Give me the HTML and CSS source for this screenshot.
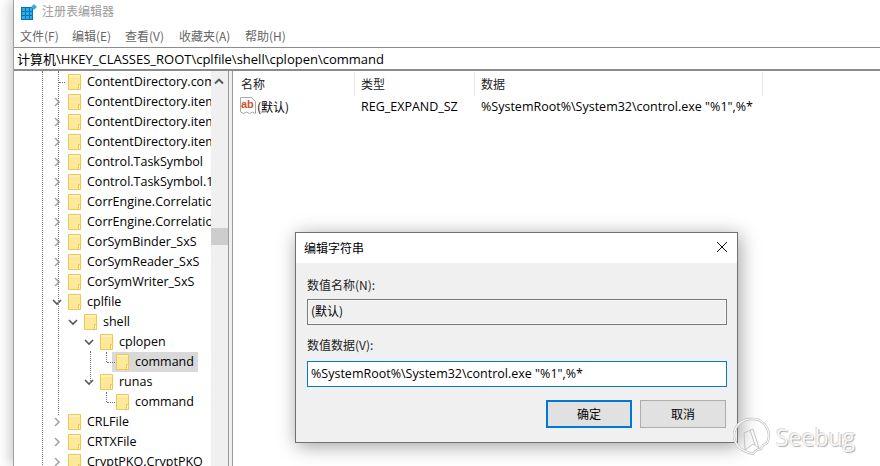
FILE: index.html
```html
<!DOCTYPE html>
<html lang="zh-CN">
<head>
<meta charset="utf-8">
<title>注册表编辑器</title>
<link rel="stylesheet" href="styles.css">
</head>
<body>
<svg class="defs" width="0" height="0" aria-hidden="true">
  <symbol id="folder" viewBox="0 0 13 16">
    <path d="M.5.5h12v15H.5z" fill="#fee99a" stroke="#efc850"/>
    <path d="M1 1h11v2H1z" fill="#fff0b8"/>
    <path d="M10.5 10.5h2v5h-2z" fill="#fff6d0" stroke="#efc850"/>
  </symbol>
  <symbol id="right" viewBox="0 0 10 10"><path d="M3 1l4 4-4 4" fill="none" stroke="#a6a6a6" stroke-width="1.6"/></symbol>
  <symbol id="down" viewBox="0 0 10 10"><path d="M1 3l4 4 4-4" fill="none" stroke="#555" stroke-width="1.6"/></symbol>
</svg>
<div class="window">
  <header class="titlebar">
    <svg class="appicon" width="16" height="16" viewBox="0 0 16 16">
      <path d="M0 3h12v13H0z" fill="#0b6fb0"/>
      <path d="M1 4h3v3H1zM5 4h3v3H5zM9 4h2v3H9zM1 8h3v3H1zM5 8h3v3H5zM9 8h2v3H9zM1 12h3v3H1zM5 12h3v3H5zM9 12h2v3H9z" fill="#29b0ea"/>
      <path d="M13 0l3 3-3 3-3-3z" fill="#4aa6d8"/>
    </svg>
    <span class="apptitle">注册表编辑器</span>
  </header>
  <nav class="menu">
    <span class="m1">文件(F)</span>
    <span class="m2">编辑(E)</span>
    <span class="m3">查看(V)</span>
    <span class="m4">收藏夹(A)</span>
    <span>帮助(H)</span>
  </nav>
  <div class="address">计算机\HKEY_CLASSES_ROOT\cplfile\shell\cplopen\command</div>
  <div class="panes">
    <div class="tree">
      <div class="guide g1"></div>
      <div class="guide g2"></div>
      <div class="guide g3"></div>
      <div class="guide g4"></div>
      <div class="guide g5"></div>
      <div class="hguide h1"></div>
      <div class="hguide h2"></div>
      <div class="hguide h3"></div>
      <div class="row d0"><span class="slot"></span><span class="label"><svg class="folder"><use href="#folder"/></svg>ContentDirectory.com</span></div>
      <div class="row d0"><span class="slot"><svg class="arrow"><use href="#right"/></svg></span><span class="label"><svg class="folder"><use href="#folder"/></svg>ContentDirectory.item</span></div>
      <div class="row d0"><span class="slot"><svg class="arrow"><use href="#right"/></svg></span><span class="label"><svg class="folder"><use href="#folder"/></svg>ContentDirectory.item</span></div>
      <div class="row d0"><span class="slot"><svg class="arrow"><use href="#right"/></svg></span><span class="label"><svg class="folder"><use href="#folder"/></svg>ContentDirectory.item</span></div>
      <div class="row d0"><span class="slot"><svg class="arrow"><use href="#right"/></svg></span><span class="label"><svg class="folder"><use href="#folder"/></svg>Control.TaskSymbol</span></div>
      <div class="row d0"><span class="slot"><svg class="arrow"><use href="#right"/></svg></span><span class="label"><svg class="folder"><use href="#folder"/></svg>Control.TaskSymbol.1</span></div>
      <div class="row d0"><span class="slot"><svg class="arrow"><use href="#right"/></svg></span><span class="label"><svg class="folder"><use href="#folder"/></svg>CorrEngine.Correlation</span></div>
      <div class="row d0"><span class="slot"><svg class="arrow"><use href="#right"/></svg></span><span class="label"><svg class="folder"><use href="#folder"/></svg>CorrEngine.Correlation</span></div>
      <div class="row d0"><span class="slot"><svg class="arrow"><use href="#right"/></svg></span><span class="label"><svg class="folder"><use href="#folder"/></svg>CorSymBinder_SxS</span></div>
      <div class="row d0"><span class="slot"><svg class="arrow"><use href="#right"/></svg></span><span class="label"><svg class="folder"><use href="#folder"/></svg>CorSymReader_SxS</span></div>
      <div class="row d0"><span class="slot"><svg class="arrow"><use href="#right"/></svg></span><span class="label"><svg class="folder"><use href="#folder"/></svg>CorSymWriter_SxS</span></div>
      <div class="row d0"><span class="slot"><svg class="arrow"><use href="#down"/></svg></span><span class="label"><svg class="folder"><use href="#folder"/></svg>cplfile</span></div>
      <div class="row d1"><span class="slot"><svg class="arrow"><use href="#down"/></svg></span><span class="label"><svg class="folder"><use href="#folder"/></svg>shell</span></div>
      <div class="row d2"><span class="slot"><svg class="arrow"><use href="#down"/></svg></span><span class="label"><svg class="folder"><use href="#folder"/></svg>cplopen</span></div>
      <div class="row d3"><span class="slot"></span><span class="label selected"><svg class="folder"><use href="#folder"/></svg>command</span></div>
      <div class="row d2"><span class="slot"><svg class="arrow"><use href="#down"/></svg></span><span class="label"><svg class="folder"><use href="#folder"/></svg>runas</span></div>
      <div class="row d3"><span class="slot"></span><span class="label"><svg class="folder"><use href="#folder"/></svg>command</span></div>
      <div class="row d0"><span class="slot"><svg class="arrow"><use href="#right"/></svg></span><span class="label"><svg class="folder"><use href="#folder"/></svg>CRLFile</span></div>
      <div class="row d0"><span class="slot"><svg class="arrow"><use href="#right"/></svg></span><span class="label"><svg class="folder"><use href="#folder"/></svg>CRTXFile</span></div>
      <div class="row d0"><span class="slot"><svg class="arrow"><use href="#right"/></svg></span><span class="label"><svg class="folder"><use href="#folder"/></svg>CryptPKO.CryptPKO</span></div>
    </div>
    <div class="scrollbar">
      <svg class="uparrow" width="10" height="7" viewBox="0 0 10 7"><path d="M1 5.5l4-4 4 4" fill="none" stroke="#555" stroke-width="1.8"/></svg>
      <div class="thumb"></div>
    </div>
    <div class="splitter"></div>
    <div class="list">
      <div class="listhead">
        <span class="col c1">名称</span>
        <span class="col c2">类型</span>
        <span class="col c3">数据</span>
      </div>
      <div class="listrow">
        <span class="c1 cell">
          <svg class="abicon" width="16" height="18" viewBox="0 0 16 18">
            <path d="M.5.5h11l4 4v12l-3-1.5-3 1.5-3-1.5-3 1.5-3-1.5z" fill="#fff" stroke="#a8a8a8"/>
            <text x="1" y="11" class="abtext">ab</text>
          </svg>(默认)
        </span>
        <span class="c2">REG_EXPAND_SZ</span>
        <span class="c3">%SystemRoot%\System32\control.exe "%1",%*</span>
      </div>
    </div>
  </div>
</div>
<section class="dialog">
  <div class="dtitle">
    <span>编辑字符串</span>
    <svg width="12" height="12" viewBox="0 0 12 12"><path d="M1 1l10 10M11 1L1 11" stroke="#111" stroke-width="1" fill="none"/></svg>
  </div>
  <div class="dbody">
    <div class="flabel">数值名称(N):</div>
    <div class="field readonly">(默认)</div>
    <div class="flabel second">数值数据(V):</div>
    <div class="field active">%SystemRoot%\System32\control.exe "%1",%*</div>
    <div class="buttons">
      <span class="btn primary">确定</span>
      <span class="btn">取消</span>
    </div>
  </div>
</section>
<div class="watermark">
  <svg width="38" height="40" viewBox="0 0 38 40">
    <g fill="none" stroke-linejoin="round">
      <g stroke="#bdbdbd" stroke-width="2.4">
        <path d="M18 2a16.500 16.500 0 0 1 16 24c-3 1-5 3-6 6-3 0-6 2-8 5-4-1-9-3-12-5A16.500 16.500 0 0 1 18 2z"/>
      </g>
      <g stroke="#fbfbfb" stroke-width="1.2">
        <path d="M18 2a16.500 16.500 0 0 1 16 24c-3 1-5 3-6 6-3 0-6 2-8 5-4-1-9-3-12-5A16.500 16.500 0 0 1 18 2z"/>
      </g>
      <g stroke="#c4c4c4" stroke-width="1">
        <path d="M11 16l9-4 6 19-6-4-8 6z"/>
        <path d="M17 13l5 15"/>
      </g>
    </g>
  </svg>
  <span class="wmtext">Seebug</span>
</div>
</body>
</html>
```

FILE: styles.css
```css
* { box-sizing: border-box; }
html, body { margin: 0; height: 466px; overflow: hidden; background: #fff; }
body {
  position: relative;
  width: 880px;
  font-family: "Open Sans", "Noto Sans CJK SC", sans-serif;
  font-size: 12.5px;
  color: #000;
}
.defs { position: absolute; }

.window {
  margin-left: 13px;
  height: 466px;
  display: flex;
  flex-direction: column;
  border-left: 1px solid #a0a0a0;
  background: #fff;
  box-shadow: -3px 0 12px rgba(0, 0, 0, 0.22);
}
.titlebar { height: 26px; display: flex; align-items: flex-start; padding: 4px 0 0 7px; flex: none; }
.appicon { margin-right: 5px; }
.apptitle { font-size: 12px; line-height: 14px; color: #9a9a9a; font-family: "Noto Sans CJK SC", sans-serif; }
.menu {
  height: 21px;
  flex: none;
  display: flex;
  align-items: center;
  padding: 0 0 2px 6px;
  font-size: 12px;
  color: #666;
  font-family: "Noto Sans CJK SC", sans-serif;
}
.m1 { width: 52px; }
.m2 { width: 53px; }
.m3 { width: 54px; }
.m4 { width: 66px; }
.address {
  height: 24px;
  flex: none;
  display: flex;
  align-items: center;
  padding-left: 3px;
  border-top: 1px solid #8c8c8c;
  border-bottom: 2px solid #8c8c8c;
  font-size: 13px;
  white-space: nowrap;
}

.panes { flex: 1; display: flex; min-height: 0; }
.tree { position: relative; width: 197px; flex: none; padding-top: 1px; overflow: hidden; font-size: 12.5px; }
.row { height: 20px; display: flex; align-items: center; white-space: nowrap; }
.d0 { padding-left: 36px; }
.d1 { padding-left: 52px; }
.d2 { padding-left: 68px; }
.d3 { padding-left: 84px; }
.slot { width: 14px; flex: none; display: flex; justify-content: center; }
.arrow { width: 10px; height: 10px; }
.label { height: 20px; display: flex; align-items: flex-start; line-height: 19px; padding: 0 4px; }
.selected { background: #d9d9d9; }
.folder { width: 13px; height: 16px; margin: 2px 6px 0 0; flex: none; }

.guide, .hguide { position: absolute; }
.guide { border-left: 1px dotted #777; width: 0; }
.hguide { border-top: 1px dotted #777; height: 0; }
.g1 { left: 28px; top: 0; height: 396px; }
.g2 { left: 44px; top: 0; height: 344px; }
.g3 { left: 76px; top: 280px; height: 32px; }
.g4 { left: 92px; top: 281px; height: 10px; }
.g5 { left: 92px; top: 321px; height: 10px; }
.h1 { left: 45px; top: 11px; width: 6px; }
.h2 { left: 93px; top: 291px; width: 8px; }
.h3 { left: 93px; top: 331px; width: 8px; }

.scrollbar { position: relative; width: 17px; flex: none; background: #f0f0f0; }
.uparrow { position: absolute; left: 3px; top: 7px; }
.thumb { position: absolute; left: 0; top: 157px; width: 17px; height: 17px; background: #cdcdcd; }
.splitter {
  width: 5px;
  flex: none;
  background: #f0f0f0;
  border-left: 1px solid #9a9a9a;
  border-right: 1px solid #9a9a9a;
}
.list { flex: 1; min-width: 0; }
.listhead { height: 25px; display: flex; align-items: center; font-family: "Noto Sans CJK SC", sans-serif; font-size: 12px; color: #222; }
.col { height: 24px; display: flex; align-items: center; border-right: 1px solid #e5e5e5; }
.listrow { height: 20px; display: flex; align-items: center; white-space: nowrap; }
.c1 { width: 122px; padding-left: 8px; flex: none; }
.c2 { width: 120px; padding-left: 6px; flex: none; }
.c3 { width: 288px; padding-left: 6px; flex: none; }
.listrow .c1 { padding-left: 7px; }
.cell { display: flex; align-items: center; font-family: "Noto Sans CJK SC", sans-serif; font-size: 12px; }
.abicon { margin-right: 1px; }
.abtext { font: bold 11px "Liberation Sans", sans-serif; fill: #d2502a; }

.dialog {
  position: absolute;
  left: 295px;
  top: 232px;
  width: 443px;
  height: 211px;
  border: 1px solid #707070;
  background: #f0f0f0;
  box-shadow: 2px 3px 18px rgba(0, 0, 0, 0.38);
  display: flex;
  flex-direction: column;
}
.dtitle {
  height: 30px;
  flex: none;
  background: #fff;
  display: flex;
  align-items: center;
  justify-content: space-between;
  padding: 0 9px 2px 8px;
  font-family: "Noto Sans CJK SC", sans-serif;
  font-size: 12px;
}
.dbody { flex: 1; padding: 11px 10px 0 11px; }
.flabel { height: 20px; display: flex; align-items: center; font-family: "Noto Sans CJK SC", sans-serif; font-size: 12px; color: #222; }
.second { margin-top: 9px; }
.field { height: 26px; margin-top: 5px; display: flex; align-items: center; padding-left: 3px; }
.readonly { border: 1px solid #7a7a7a; box-shadow: inset 0 0 0 1px #fafafa; padding-bottom: 3px; font-family: "Noto Sans CJK SC", sans-serif; font-size: 12px; background: #f0f0f0; }
.active { border: 1px solid #0078d7; background: #fff; margin-top: 7px; padding-bottom: 1px; }
.buttons { display: flex; gap: 8px; margin-top: 13px; padding-left: 239px; }
.btn {
  width: 86px;
  height: 28px;
  display: flex;
  align-items: center;
  justify-content: center;
  padding-bottom: 2px;
  background: #e1e1e1;
  border: 1px solid #adadad;
  font-family: "Noto Sans CJK SC", sans-serif;
  font-size: 12px;
}
.primary { border: 2px solid #0078d7; }

.watermark {
  position: absolute;
  left: 733px;
  top: 417px;
  display: flex;
  align-items: center;
  gap: 5px;
}
.wmtext {
  font-family: "Open Sans", sans-serif;
  font-size: 23px;
  color: #f6f6f6;
  text-shadow: 1px 1px 1px #aaa, -1px -1px 0 #ddd;
}
```
